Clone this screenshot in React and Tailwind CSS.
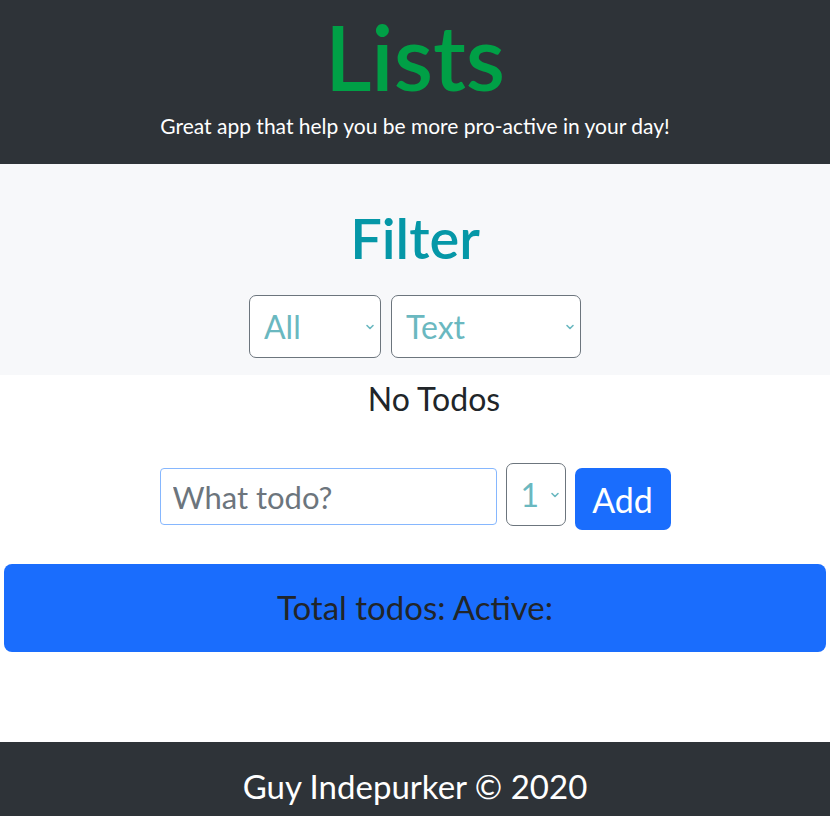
import { useState } from 'react'

function Chevron() {
  return (
    <svg
      className="pointer-events-none absolute right-[6px] top-1/2 -translate-y-1/2"
      width="10"
      height="8"
      viewBox="0 0 10 8"
      fill="none"
    >
      <path d="M2 2.5 5 5.5 8 2.5" stroke="#6ab8c0" strokeWidth="1.6" strokeLinecap="round" strokeLinejoin="round" />
    </svg>
  )
}

function Select({ value, options, onChange, className }) {
  return (
    <div className={`relative ${className}`}>
      <select
        value={value}
        onChange={(e) => onChange(e.target.value)}
        className="h-full w-full appearance-none rounded-[7px] border border-[#6c757d] bg-white pl-[14px] text-[32px] text-[#6ab8c0] outline-none"
      >
        {options.map((o) => (
          <option key={o}>{o}</option>
        ))}
      </select>
      <Chevron />
    </div>
  )
}

export default function App() {
  const [show, setShow] = useState('All')
  const [sortBy, setSortBy] = useState('Text')
  const [text, setText] = useState('')
  const [priority, setPriority] = useState('1')

  return (
    <div className="min-h-[816px] overflow-hidden bg-white font-['Lato',sans-serif] text-[#212529]">
      <header className="flex h-[164px] flex-col items-center bg-[#2e3338]">
        <h1 className="mt-[6px] text-[90px] leading-[100px] font-semibold text-[#00a046]">Lists</h1>
        <p className="mt-[4px] text-[21px] text-white">Great app that help you be more pro-active in your day!</p>
      </header>

      <section className="flex h-[211px] flex-col items-center bg-[#f7f8fa]">
        <h2 className="mt-[44px] text-[56px] leading-[60px] font-semibold text-[#0597a7]">Filter</h2>
        <div className="mt-[27px] flex gap-[10px]">
          <Select value={show} options={['All', 'Active', 'Done']} onChange={setShow} className="h-[63px] w-[132px]" />
          <Select value={sortBy} options={['Text', 'Priority']} onChange={setSortBy} className="h-[63px] w-[190px]" />
        </div>
      </section>

      <p className="mt-[6px] pl-[38px] text-center text-[32px] leading-[36px]">No Todos</p>

      <form onSubmit={(e) => e.preventDefault()} className="mt-[46px] flex items-start justify-center gap-[9px]">
        <input
          value={text}
          onChange={(e) => setText(e.target.value)}
          placeholder="What todo?"
          className="mt-[5px] h-[57px] w-[337px] rounded-[4px] border border-[#86b7fe] px-[12px] text-[31px] outline-none placeholder:text-[#6c757d]"
        />
        <Select value={priority} options={['1', '2', '3']} onChange={setPriority} className="h-[63px] w-[60px]" />
        <button type="submit" className="mt-[5px] h-[62px] w-[96px] rounded-[7px] bg-[#1a6dfd] text-[34px] text-white">
          Add
        </button>
      </form>

      <div className="mx-[4px] mt-[34px] flex h-[88px] items-center justify-center rounded-[8px] bg-[#1a6dfd] text-[33px]">
        Total todos: Active:
      </div>

      <footer className="mt-[90px] flex h-[90px] items-start justify-center bg-[#2e3338] pt-[24px] text-[33px] leading-[40px] text-white">
        Guy Indepurker © 2020
      </footer>
    </div>
  )
}
